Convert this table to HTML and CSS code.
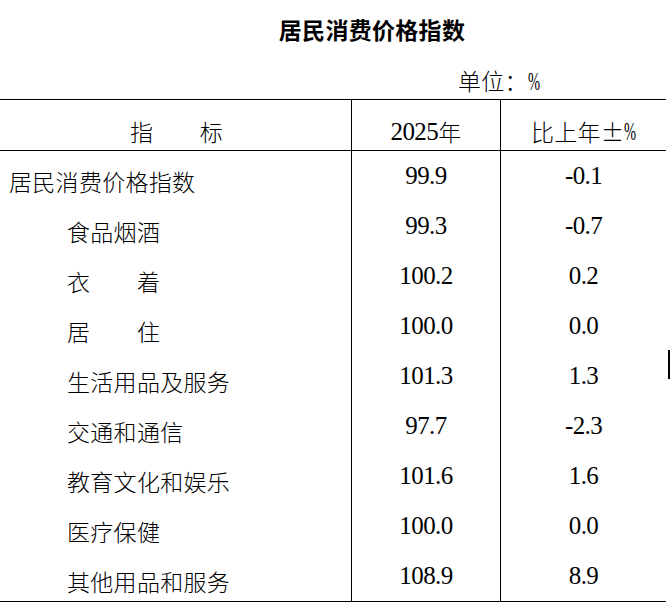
FILE: index.html
```html
<!DOCTYPE html>
<html lang="zh-CN">
<head>
<meta charset="utf-8">
<title>居民消费价格指数</title>
<link rel="stylesheet" href="styles.css">
</head>
<body>
<h1 class="title">居民消费价格指数</h1>
<div class="unit">单位：<span class="pct">%</span></div>
<div class="sheet">
  <div class="cell head name-head">指　　标</div>
  <div class="cell head num-col"><span class="num">2025</span>年</div>
  <div class="cell head num-col">比上年±<span class="pct">%</span></div>

  <div class="cell name top">居民消费价格指数</div>
  <div class="cell num-col num">99.9</div>
  <div class="cell num-col num">-0.1</div>

  <div class="cell name sub">食品烟酒</div>
  <div class="cell num-col num">99.3</div>
  <div class="cell num-col num">-0.7</div>

  <div class="cell name sub">衣　　着</div>
  <div class="cell num-col num">100.2</div>
  <div class="cell num-col num">0.2</div>

  <div class="cell name sub">居　　住</div>
  <div class="cell num-col num">100.0</div>
  <div class="cell num-col num">0.0</div>

  <div class="cell name sub">生活用品及服务</div>
  <div class="cell num-col num">101.3</div>
  <div class="cell num-col num">1.3</div>

  <div class="cell name sub">交通和通信</div>
  <div class="cell num-col num">97.7</div>
  <div class="cell num-col num">-2.3</div>

  <div class="cell name sub">教育文化和娱乐</div>
  <div class="cell num-col num">101.6</div>
  <div class="cell num-col num">1.6</div>

  <div class="cell name sub">医疗保健</div>
  <div class="cell num-col num">100.0</div>
  <div class="cell num-col num">0.0</div>

  <div class="cell name sub">其他用品和服务</div>
  <div class="cell num-col num">108.9</div>
  <div class="cell num-col num">8.9</div>
</div>
<div class="caret"></div>
</body>
</html>
```

FILE: styles.css
```css
html, body {
  margin: 0;
  padding: 0;
  background: #fff;
}

body {
  position: relative;
  width: 670px;
  height: 609px;
  overflow: hidden;
  color: #000;
  font-family: "Noto Sans CJK SC", sans-serif;
  font-size: 23px;
  font-weight: 300;
  letter-spacing: 0.3px;
}

.title {
  margin: 0;
  height: 55px;
  box-sizing: border-box;
  padding: 18px 0 0 74px;
  text-align: center;
  font-size: 23px;
  line-height: 23px;
  font-weight: 700;
  letter-spacing: 0.3px;
}

.unit {
  height: 44px;
  box-sizing: border-box;
  padding: 14px 0 0 458px;
  line-height: 23px;
}

.pct {
  display: inline-block;
  font-family: "Liberation Serif", serif;
  font-size: 25px;
  font-weight: 400;
  letter-spacing: 0;
  transform: scaleX(0.58);
  transform-origin: left center;
  margin-right: -9px;
}

.sheet {
  display: grid;
  grid-template-columns: 351px 149px 166px;
  width: 666px;
  border-top: 1px solid #000;
  border-bottom: 1px solid #000;
}

.cell {
  box-sizing: border-box;
  height: 50px;
  display: flex;
  align-items: center;
  line-height: 1;
  white-space: nowrap;
}

.head {
  height: 51px;
  border-bottom: 1px solid #000;
  justify-content: center;
  padding-top: 12px;
}

.name-head {
  padding-left: 2px;
}

.num-col {
  border-left: 1px solid #000;
  justify-content: center;
}

.name {
  padding-top: 10px;
}

.top {
  padding-left: 9px;
}

.sub {
  padding-left: 67px;
}

.num {
  font-family: "Liberation Serif", "Noto Sans CJK SC", serif;
  font-size: 25px;
  font-weight: 400;
  letter-spacing: -0.6px;
}

.cell.num {
  padding-bottom: 1px;
}

.caret {
  position: absolute;
  left: 668px;
  top: 350px;
  width: 2px;
  height: 29px;
  background: #000;
}
```
